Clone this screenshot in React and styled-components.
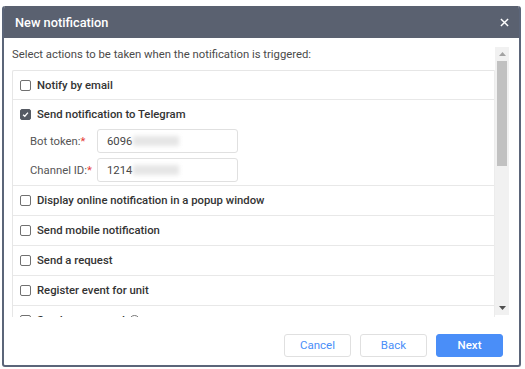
import styled, { createGlobalStyle } from "styled-components";

const GlobalStyle = createGlobalStyle`
  html, body {
    margin: 0;
    padding: 0;
    background: #ffffff;
  }
  body {
    font-family: Roboto, "Liberation Sans", Arial, sans-serif;
  }
`;

const Page = styled.div`
  padding: 6px 0 0 2px;
`;

const Dialog = styled.div`
  width: 515px;
  height: 359px;
  border: 2px solid #5b6579;
  border-top: none;
  border-radius: 3px;
  background: #ffffff;
  display: flex;
  flex-direction: column;
  overflow: hidden;
`;

const Header = styled.div`
  height: 32px;
  flex-shrink: 0;
  margin: 0 -2px;
  padding: 0 12px 0 13px;
  background: #5a6170;
  color: #ffffff;
  display: flex;
  align-items: center;
  justify-content: space-between;
  border-radius: 3px 3px 0 0;
`;

const Title = styled.div`
  font-size: 12.8px;
  font-weight: 500;
`;

const CloseButton = styled.button`
  border: none;
  background: none;
  padding: 0;
  display: flex;
  cursor: pointer;
`;

const ScrollArea = styled.div`
  height: 270px;
  flex-shrink: 0;
  margin-top: 9px;
  padding: 0 10px 0 8px;
  display: flex;
`;

const Content = styled.div`
  flex: 1;
  overflow: hidden;
`;

const Intro = styled.div`
  height: 23px;
  font-size: 11.3px;
  color: #4a4a4a;
  line-height: 16px;
`;

const List = styled.div`
  border: 1px solid #e6e6e6;
  border-right-color: #ececec;
  border-radius: 2px 0 0 2px;
`;

const Row = styled.div`
  border-top: ${(p) => (p.$first ? "none" : "1px solid #e8e8e8")};
  padding: 0 0 ${(p) => (p.$expanded ? "3px" : "0")} 7px;
`;

const RowHead = styled.label`
  height: ${(p) => (p.$short ? "28px" : "29px")};
  display: flex;
  align-items: center;
  gap: 6px;
  font-size: 11.3px;
  font-weight: 500;
  color: #333;
`;

const Box = styled.span`
  width: 9px;
  height: 9px;
  flex-shrink: 0;
  border: 1px solid ${(p) => (p.$checked ? "#555a63" : "#707070")};
  background: ${(p) => (p.$checked ? "#555a63" : "#fff")};
  border-radius: 2px;
  display: flex;
  align-items: center;
  justify-content: center;
`;

const Field = styled.div`
  display: flex;
  align-items: center;
  height: 24px;
  margin-bottom: 5px;
  padding-left: 10px;

  &:last-child {
    margin-bottom: 0;
  }
`;

const FieldLabel = styled.div`
  width: 67px;
  white-space: nowrap;
  font-size: 11.3px;
  color: #555;
`;

const Star = styled.span`
  color: #e53935;
`;

const Input = styled.div`
  width: 130px;
  height: 22px;
  border: 1px solid #e0e0e0;
  border-radius: 3px;
  padding-left: 9px;
  display: flex;
  align-items: center;
  font-size: 11.3px;
  color: #444;
`;

const Blur = styled.span`
  display: inline-block;
  width: 46px;
  height: 10px;
  margin-left: 1px;
  background: #e6e6e6;
  filter: blur(2px);
`;

const InfoMark = styled.span`
  width: 9px;
  height: 9px;
  border: 1px solid #777;
  border-radius: 50%;
  margin-left: -2px;
`;

const Scrollbar = styled.div`
  width: 14px;
  height: 268px;
  flex-shrink: 0;
  background: #f1f1f1;
  display: flex;
  flex-direction: column;
  align-items: center;
`;

const Arrow = styled.div`
  height: 14px;
  display: flex;
  align-items: center;
  justify-content: center;
`;

const Thumb = styled.div`
  width: 10px;
  height: 105px;
  background: #c1c1c1;
`;

const Spacer = styled.div`
  flex: 1;
`;

const Footer = styled.div`
  flex: 1;
  display: flex;
  justify-content: flex-end;
  align-items: center;
  gap: 9px;
  padding: 8px 16px 0 0;
`;

const Button = styled.button`
  width: 67px;
  height: 23px;
  border-radius: 3px;
  font-family: inherit;
  font-size: 11.5px;
  border: 1px solid ${(p) => (p.$primary ? "#4a8ef8" : "#e0e0e0")};
  background: ${(p) => (p.$primary ? "#4a8ef8" : "#ffffff")};
  color: ${(p) => (p.$primary ? "#ffffff" : "#4a8ef8")};
  font-weight: ${(p) => (p.$primary ? 500 : 400)};
  cursor: pointer;
`;

const Check = ({ checked }) => (
  <Box $checked={checked}>
    {checked && (
      <svg width="7" height="7" viewBox="0 0 8 8">
        <path d="M1.2 4.2 L3.2 6 L6.8 1.8" stroke="#fff" strokeWidth="1.5" fill="none" />
      </svg>
    )}
  </Box>
);

const options = [
  "Display online notification in a popup window",
  "Send mobile notification",
  "Send a request",
  "Register event for unit",
];

const App = () => {
  return (
    <>
      <GlobalStyle />
      <Page>
        <Dialog>
          <Header>
            <Title>New notification</Title>
            <CloseButton>
              <svg width="9" height="9" viewBox="0 0 10 10">
                <path d="M1 1 L9 9 M9 1 L1 9" stroke="#fff" strokeWidth="1.6" />
              </svg>
            </CloseButton>
          </Header>
          <ScrollArea>
            <Content>
              <Intro>Select actions to be taken when the notification is triggered:</Intro>
              <List>
                <Row $first>
                  <RowHead $short>
                    <Check />
                    Notify by email
                  </RowHead>
                </Row>
                <Row $expanded>
                  <RowHead>
                    <Check checked />
                    Send notification to Telegram
                  </RowHead>
                  <Field>
                    <FieldLabel>
                      Bot token:<Star>*</Star>
                    </FieldLabel>
                    <Input>
                      6096<Blur />
                    </Input>
                  </Field>
                  <Field>
                    <FieldLabel>
                      Channel ID:<Star>*</Star>
                    </FieldLabel>
                    <Input>
                      1214<Blur />
                    </Input>
                  </Field>
                </Row>
                {options.map((label) => (
                  <Row key={label}>
                    <RowHead>
                      <Check />
                      {label}
                    </RowHead>
                  </Row>
                ))}
                <Row>
                  <RowHead>
                    <Check />
                    Send a command
                    <InfoMark />
                  </RowHead>
                </Row>
              </List>
            </Content>
            <Scrollbar>
              <Arrow>
                <svg width="7" height="4" viewBox="0 0 7 4">
                  <path d="M0 4 L3.5 0 L7 4 Z" fill="#a3a3a3" />
                </svg>
              </Arrow>
              <Thumb />
              <Spacer />
              <Arrow>
                <svg width="7" height="4" viewBox="0 0 7 4">
                  <path d="M0 0 L3.5 4 L7 0 Z" fill="#505050" />
                </svg>
              </Arrow>
            </Scrollbar>
          </ScrollArea>
          <Footer>
            <Button>Cancel</Button>
            <Button>Back</Button>
            <Button $primary>Next</Button>
          </Footer>
        </Dialog>
      </Page>
    </>
  );
};

export default App;
